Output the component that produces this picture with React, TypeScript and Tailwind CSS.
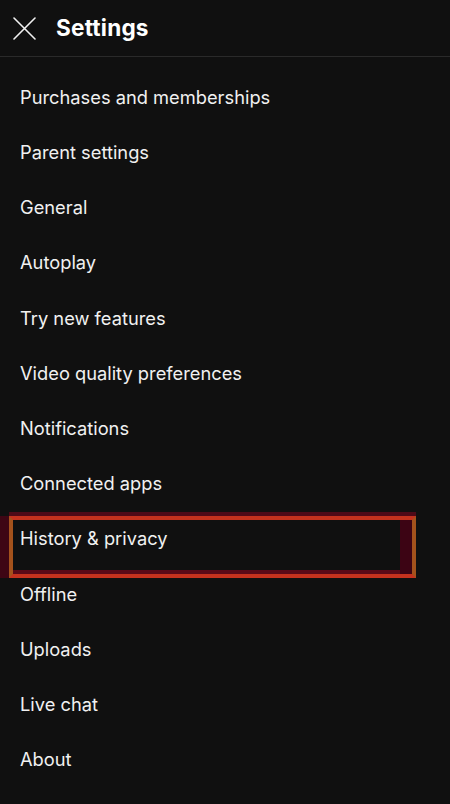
const items = [
  'Purchases and memberships',
  'Parent settings',
  'General',
  'Autoplay',
  'Try new features',
  'Video quality preferences',
  'Notifications',
  'Connected apps',
  'History & privacy',
  'Offline',
  'Uploads',
  'Live chat',
  'About',
];

export default function App() {
  return (
    <div
      className="min-h-[804px] w-[450px] overflow-hidden bg-[#101010] text-[#f1f1f1]"
      style={{ fontFamily: 'Inter, "Noto Sans", sans-serif' }}
    >
      {/* Header */}
      <div className="flex h-[57px] items-center gap-[20px] border-b border-[#2a2a2a] pl-[13px]">
        <svg width="23" height="23" viewBox="0 0 23 23" className="shrink-0">
          <path d="M1 1L22 22M22 1L1 22" stroke="#f1f1f1" strokeWidth="1.6" strokeLinecap="round" />
        </svg>
        <h1 className="text-[22.6px] font-bold tracking-[0.2px] text-white">Settings</h1>
      </div>

      {/* List */}
      <div className="flex flex-col pt-[13px]">
        {items.map((label) => (
          <div key={label} className="relative flex h-[55.2px] items-center pl-[20px] text-[18.3px]">
            {label === 'History & privacy' && (
              <div className="pointer-events-none absolute left-[9px] top-[4px] h-[62px] w-[407px] border-4 border-x-[#a4521c] border-y-[#c4321e] shadow-[0_-4px_0_#4e0a18,-9px_0_0_#3e0614,inset_-12px_0_0_#3c0414,inset_0_-4px_0_#5a0a18]" />
            )}
            <span className="relative">{label}</span>
          </div>
        ))}
      </div>
    </div>
  );
}
